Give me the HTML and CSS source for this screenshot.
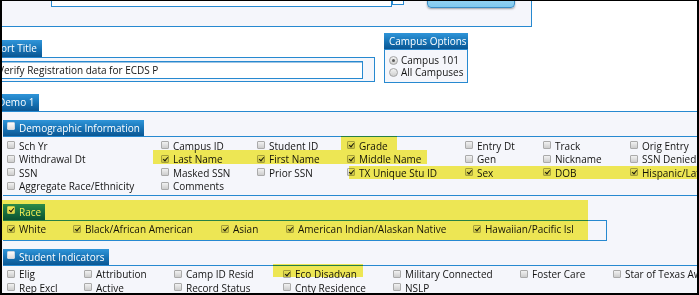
FILE: index.html
```html
<!DOCTYPE html>
<html>
<head>
<meta charset="utf-8">
<title>Report Options</title>
<link rel="stylesheet" href="styles.css">
</head>
<body>
<div class="frame">
  <div class="page">
    <div class="toolbar">
      <div class="tb-input"></div>
      <div class="tb-mini"></div>
      <div class="tb-btn"></div>
    </div>

    <div class="options">
      <div class="report">
        <div class="tab report-tab">Report Title</div>
        <div class="report-box">
          <div class="title-input">Verify Registration data for ECDS P</div>
        </div>
      </div>
      <div class="campus">
        <div class="campus-head">Campus Options</div>
        <div class="campus-box">
          <div class="radio"><span class="rd on"></span>Campus 101</div>
          <div class="radio"><span class="rd"></span>All Campuses</div>
        </div>
      </div>
    </div>

    <div class="tab demo-tab">Demo 1</div>
    <div class="demo-panel">
      <section class="group">
        <div class="group-head"><span class="hcb"></span>Demographic Information</div>
        <div class="group-body demo-grid">
          <div class="item"><span class="cb"></span>Sch Yr</div>
          <div class="item"><span class="cb"></span>Campus ID</div>
          <div class="item"><span class="cb"></span>Student ID</div>
          <div class="item"><span class="cb on"></span>Grade</div>
          <div class="item"><span class="cb"></span>Entry Dt</div>
          <div class="item"><span class="cb"></span>Track</div>
          <div class="item"><span class="cb"></span>Orig Entry</div>

          <div class="item"><span class="cb"></span>Withdrawal Dt</div>
          <div class="item"><span class="cb on"></span>Last Name</div>
          <div class="item"><span class="cb on"></span>First Name</div>
          <div class="item"><span class="cb on"></span>Middle Name</div>
          <div class="item"><span class="cb"></span>Gen</div>
          <div class="item"><span class="cb"></span>Nickname</div>
          <div class="item"><span class="cb"></span>SSN Denied</div>

          <div class="item"><span class="cb"></span>SSN</div>
          <div class="item"><span class="cb"></span>Masked SSN</div>
          <div class="item"><span class="cb"></span>Prior SSN</div>
          <div class="item"><span class="cb on"></span>TX Unique Stu ID</div>
          <div class="item"><span class="cb on"></span>Sex</div>
          <div class="item"><span class="cb on"></span>DOB</div>
          <div class="item"><span class="cb on"></span>Hispanic/Latino</div>

          <div class="item"><span class="cb"></span>Aggregate Race/Ethnicity</div>
          <div class="item"><span class="cb"></span>Comments</div>
        </div>
      </section>

      <section class="group race">
        <div class="group-head"><span class="hcb on"></span>Race</div>
        <div class="group-body race-grid">
          <div class="item"><span class="cb on"></span>White</div>
          <div class="item"><span class="cb on"></span>Black/African American</div>
          <div class="item"><span class="cb on"></span>Asian</div>
          <div class="item"><span class="cb on"></span>American Indian/Alaskan Native</div>
          <div class="item"><span class="cb on"></span>Hawaiian/Pacific Isl</div>
        </div>
      </section>

      <section class="group si">
        <div class="group-head"><span class="hcb"></span>Student Indicators</div>
        <div class="group-body si-grid">
          <div class="item"><span class="cb"></span>Elig</div>
          <div class="item"><span class="cb"></span>Attribution</div>
          <div class="item"><span class="cb"></span>Camp ID Resid</div>
          <div class="item"><span class="cb on"></span>Eco Disadvan</div>
          <div class="item"><span class="cb"></span>Military Connected</div>
          <div class="item"><span class="cb"></span>Foster Care</div>
          <div class="item"><span class="cb"></span>Star of Texas Award</div>

          <div class="item"><span class="cb"></span>Rep Excl</div>
          <div class="item"><span class="cb"></span>Active</div>
          <div class="item"><span class="cb"></span>Record Status</div>
          <div class="item"><span class="cb"></span>Cnty Residence</div>
          <div class="item"><span class="cb"></span>NSLP</div>
        </div>
      </section>
    </div>
  </div>

  <div class="hl hl-grade"></div>
  <div class="hl hl-names"></div>
  <div class="hl hl-tx"></div>
  <div class="hl hl-race"></div>
  <div class="hl hl-eco"></div>
</div>
</body>
</html>
```

FILE: styles.css
```css
* { box-sizing: border-box; }

html, body {
  margin: 0;
  padding: 0;
  background: #fff;
}

body {
  font-family: "Open Sans", "Noto Sans", sans-serif;
  font-size: 10px;
  color: #141414;
}

.frame {
  position: relative;
  width: 699px;
  height: 295px;
  border-style: solid;
  border-color: #000;
  border-width: 1px 2px 2px 2px;
  overflow: hidden;
  background: #fff;
}

.page {
  width: 780px;
}

/* top toolbar (clipped) */
.toolbar {
  display: flex;
  align-items: flex-start;
  width: 530px;
  height: 26px;
  background: #f5f6fb;
  border-right: 1px solid #2789d0;
  border-bottom: 1px solid #2789d0;
}

.tb-input {
  margin-left: 49px;
  margin-top: -14px;
  width: 341px;
  height: 20px;
  background: #fff;
  border: 1px solid #2789d0;
}

.tb-mini {
  margin-top: -14px;
  width: 12px;
  height: 18px;
  background: #fff;
  border: 1px solid #2789d0;
}

.tb-btn {
  margin-left: 23px;
  margin-top: -14px;
  width: 88px;
  height: 21px;
  border: 1px solid #3a8cc4;
  border-radius: 4px;
  background: linear-gradient(#b8e3f8, #80c9ee);
  box-shadow: 0 1px 2px rgba(0, 0, 0, 0.35);
}

/* tabs / headers */
.tab,
.campus-head,
.group-head {
  color: #fff;
  background: linear-gradient(#2f95d9, #1672b4 55%, #0b5793);
  white-space: nowrap;
}

.tab {
  height: 17px;
  line-height: 17px;
}

.options {
  display: flex;
  align-items: flex-start;
}

.report {
  margin-left: -24px;
  margin-top: 13px;
  width: 397px;
}

.report-tab {
  width: 64px;
  padding-left: 5px;
}

.report-box {
  border: 1px solid #2789d0;
  background: #f5f6fb;
  padding: 3px 11px 2px 15px;
}

.title-input {
  height: 18px;
  line-height: 17px;
  padding-left: 3px;
  background: #fff;
  border: 1px solid #2789d0;
  box-shadow: inset 1px 1px 0 #9cc4e4;
  white-space: nowrap;
  overflow: hidden;
}

.campus {
  margin-left: 9px;
  margin-top: 6px;
  width: 84px;
}

.campus-head {
  height: 16px;
  line-height: 16px;
  padding-left: 5px;
}

.campus-box {
  border: 1px solid #2789d0;
  background: #f5f6fb;
  padding: 4px 0 4px 4px;
}

.radio {
  display: flex;
  align-items: center;
  height: 12px;
  line-height: 12px;
  white-space: nowrap;
}

.rd {
  position: relative;
  flex: none;
  width: 9px;
  height: 9px;
  margin-right: 3px;
  border: 1px solid #a3a3a3;
  border-radius: 50%;
  background: linear-gradient(#f3f3f3, #cfcfcf);
}

.rd.on::after {
  content: "";
  position: absolute;
  left: 2px;
  top: 2px;
  width: 3px;
  height: 3px;
  border-radius: 50%;
  background: #5a5a5a;
}

.demo-tab {
  margin-left: -9px;
  margin-top: 11px;
  width: 46px;
  padding-left: 5px;
}

.demo-panel {
  border-top: 1px solid #2789d0;
  background: #f5f6fb;
  padding: 7px 0 0 1px;
  height: 200px;
}

.group-head {
  display: inline-flex;
  align-items: flex-start;
  height: 16px;
  line-height: 16px;
  padding: 0 4px;
}

.group-body {
  display: grid;
  grid-auto-rows: 13.5px;
  line-height: 13.5px;
  border-top: 1px solid #2789d0;
  border-bottom: 1px solid #2789d0;
  padding: 2.5px 0 1.5px 4px;
}

.demo-grid {
  grid-template-columns: 154px 96px 90px 118px 78px 87px 140px;
}

.race {
  margin-top: 7px;
}

.race-grid {
  width: 604px;
  border-right: 1px solid #2789d0;
  padding: 2px 0 3.5px 4px;
  grid-template-columns: 66px 148px 65px 187px 130px;
}

.si {
  margin-top: 7px;
}

.si-grid {
  padding: 2px 0 0 4px;
  grid-template-columns: 77px 90px 109px 110px 127px 93px 140px;
}

.item {
  display: flex;
  align-items: center;
  white-space: nowrap;
}

.cb,
.hcb {
  position: relative;
  flex: none;
  width: 8px;
  height: 8px;
  margin-right: 4px;
  border: 1px solid #aaaaaa;
  border-radius: 1px;
  background: linear-gradient(#f1f1f1, #cdcdcd);
}

.cb {
  top: -1px;
}

.hcb {
  margin-top: 2px;
  border-color: #c9d6e2;
  background: linear-gradient(#fbfbfb, #dedede);
}

.cb.on::after,
.hcb.on::after {
  content: "";
  position: absolute;
  left: 2px;
  top: 0;
  width: 2px;
  height: 4px;
  border: solid #1b1b1b;
  border-width: 0 1.5px 1.5px 0;
  transform: rotate(40deg);
}

/* annotation highlights */
.hl {
  position: absolute;
  background: #f7ef55;
  mix-blend-mode: multiply;
}

.hl-grade { left: 339px; top: 135px; width: 56px; height: 14px; }
.hl-names { left: 151px; top: 149px; width: 274px; height: 14px; }
.hl-tx { left: 347px; top: 165px; width: 360px; height: 13px; }
.hl-race { left: 0; top: 199px; width: 586px; height: 40px; }
.hl-eco { left: 271px; top: 263px; width: 90px; height: 13px; }
```
